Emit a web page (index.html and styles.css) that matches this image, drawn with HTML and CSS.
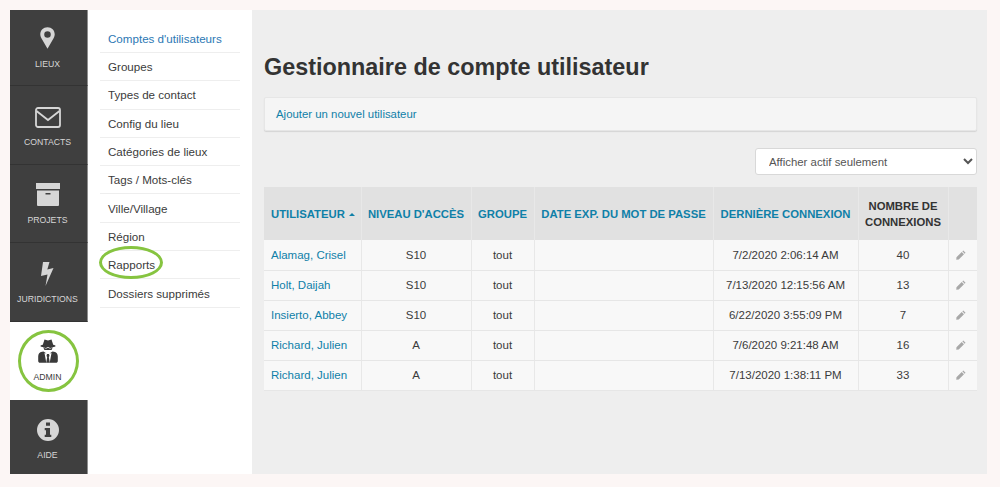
FILE: index.html
```html
<!DOCTYPE html>
<html lang="fr">
<head>
<meta charset="utf-8">
<title>Gestionnaire de compte utilisateur</title>
<link rel="stylesheet" href="styles.css">
</head>
<body>
<div class="app">
  <nav class="rail">
    <a class="rail-item h-lieux">
      <svg class="ico" width="15" height="22" viewBox="0 0 16 23"><path fill-rule="evenodd" d="M8 0C3.500 0 .3 3.300.3 7.600c0 1.600.5 2.800 1.200 4.100L8 23l6.500-11.300c.7-1.300 1.200-2.500 1.200-4.100C15.700 3.300 12.500 0 8 0zm0 4.300a3.500 3.500 0 1 1 0 7 3.500 3.500 0 0 1 0-7z"/></svg>
      <span>LIEUX</span>
    </a>
    <a class="rail-item h-contacts">
      <svg class="ico" width="26" height="21" viewBox="0 0 26 21"><rect x="1" y="1" width="24" height="19" rx="2" fill="none" stroke="currentColor" stroke-width="1.800"/><path d="M1.500 4l11.500 9 11.500-9" fill="none" stroke="currentColor" stroke-width="1.800"/></svg>
      <span>CONTACTS</span>
    </a>
    <a class="rail-item h-projets">
      <svg class="ico" width="24" height="23" viewBox="0 0 24 23"><rect x="0" y="0" width="24" height="6"/><path fill-rule="evenodd" d="M1 7.500h22V22a1 1 0 0 1-1 1H2a1 1 0 0 1-1-1zM9.500 10v1.500h5V10z"/></svg>
      <span>PROJETS</span>
    </a>
    <a class="rail-item h-jur">
      <svg class="ico" width="13" height="24" viewBox="0 0 13 24"><path d="M2 0h6.500L6.300 7.500 12.500 6 4.500 24l2-11.500L0 14z"/></svg>
      <span>JURIDICTIONS</span>
    </a>
    <a class="rail-item h-admin active">
      <svg class="ico" width="20" height="24" viewBox="0 0 20 24"><path fill-rule="evenodd" d="M6.500.5 10 1.500 13.500.5l1.700 5.300c1.300.3 2.300.7 2.300 1.200 0 .6-1.300 1-3 1.300-.1 1-.4 2-1 2.700h-7c-.6-.7-.9-1.700-1-2.700-1.700-.3-3-.7-3-1.300 0-.5 1-.9 2.300-1.200zM6 8.500c1 .6 2.800.6 3.200-.3h1.600c.4.900 2.200.9 3.200.3-.3.800-2 1.300-3 .8-.6-.4-1.400-.4-2 0-1 .5-2.700 0-3-.8z"/><path d="M5.500 12.500 4 12.800C1.500 13.300.2 15 .2 17.500V22c0 1 .8 1.800 1.800 1.800h6.300L6.500 14l2 .5zM14.500 12.500l1.500.3c2.500.5 3.800 2.200 3.800 4.700V22c0 1-.8 1.800-1.800 1.800h-6.300L13.500 14l-2 .5z"/><path d="M9 15h2l.5 2-.7 1 1 5.800H8.200l1-5.800-.7-1z"/></svg>
      <span>ADMIN</span>
    </a>
    <a class="rail-item h-aide">
      <svg class="ico" width="22" height="22" viewBox="0 0 22 22"><path fill-rule="evenodd" d="M11 0a11 11 0 1 1 0 22 11 11 0 0 1 0-22zM9 3.500v3.300h4V3.500zM7.700 9v2.300H9v4.400H7.700V18h6.600v-2.300H13V9z"/></svg>
      <span>AIDE</span>
    </a>
    <div class="ring ring-admin"></div>
  </nav>

  <aside class="subnav">
    <ul class="subnav-list">
      <li class="current">Comptes d'utilisateurs</li>
      <li>Groupes</li>
      <li>Types de contact</li>
      <li>Config du lieu</li>
      <li>Catégories de lieux</li>
      <li>Tags / Mots-clés</li>
      <li>Ville/Village</li>
      <li>Région</li>
      <li>Rapports</li>
      <li>Dossiers supprimés</li>
    </ul>
    <div class="ring ring-rapports"></div>
  </aside>

  <main class="main">
    <h1>Gestionnaire de compte utilisateur</h1>
    <div class="well"><a>Ajouter un nouvel utilisateur</a></div>
    <div class="filter-row">
      <select class="filter"><option>Afficher actif seulement</option></select>
    </div>
    <table class="users">
      <colgroup>
        <col class="c1"><col class="c2"><col class="c3"><col class="c4"><col class="c5"><col class="c6"><col class="c7">
      </colgroup>
      <thead>
        <tr>
          <th class="left">UTILISATEUR <span class="caret"></span></th>
          <th>NIVEAU D'ACCÈS</th>
          <th>GROUPE</th>
          <th>DATE EXP. DU MOT DE PASSE</th>
          <th>DERNIÈRE CONNEXION</th>
          <th class="dark">NOMBRE DE CONNEXIONS</th>
          <th></th>
        </tr>
      </thead>
      <tbody>
        <tr><td class="left"><a>Alamag, Crisel</a></td><td>S10</td><td>tout</td><td></td><td>7/2/2020 2:06:14 AM</td><td>40</td><td><svg class="pen" width="10" height="10" viewBox="0 0 11 11"><path d="M8 .5 10.500 3l-1 1L7 1.500zM6.300 2.200 8.800 4.700 3 10.500.3 10.700.5 8z"/></svg></td></tr>
        <tr><td class="left"><a>Holt, Daijah</a></td><td>S10</td><td>tout</td><td></td><td>7/13/2020 12:15:56 AM</td><td>13</td><td><svg class="pen" width="10" height="10" viewBox="0 0 11 11"><path d="M8 .5 10.500 3l-1 1L7 1.500zM6.300 2.200 8.800 4.700 3 10.500.3 10.700.5 8z"/></svg></td></tr>
        <tr><td class="left"><a>Insierto, Abbey</a></td><td>S10</td><td>tout</td><td></td><td>6/22/2020 3:55:09 PM</td><td>7</td><td><svg class="pen" width="10" height="10" viewBox="0 0 11 11"><path d="M8 .5 10.500 3l-1 1L7 1.500zM6.300 2.200 8.800 4.700 3 10.500.3 10.700.5 8z"/></svg></td></tr>
        <tr><td class="left"><a>Richard, Julien</a></td><td>A</td><td>tout</td><td></td><td>7/6/2020 9:21:48 AM</td><td>16</td><td><svg class="pen" width="10" height="10" viewBox="0 0 11 11"><path d="M8 .5 10.500 3l-1 1L7 1.500zM6.300 2.200 8.800 4.700 3 10.500.3 10.700.5 8z"/></svg></td></tr>
        <tr><td class="left"><a>Richard, Julien</a></td><td>A</td><td>tout</td><td></td><td>7/13/2020 1:38:11 PM</td><td>33</td><td><svg class="pen" width="10" height="10" viewBox="0 0 11 11"><path d="M8 .5 10.500 3l-1 1L7 1.500zM6.300 2.200 8.800 4.700 3 10.500.3 10.700.5 8z"/></svg></td></tr>
      </tbody>
    </table>
  </main>
</div>
</body>
</html>
```
FILE: styles.css
```css
* { box-sizing: border-box; }
html, body { height: 100%; }
body {
  margin: 0;
  padding: 10px 13px 13px 10px;
  background: #fcf6f5;
  font-family: "Liberation Sans", Arial, sans-serif;
  color: #333;
  overflow: hidden;
}
.app { display: flex; height: 464px; background: #fff; }

/* left rail */
.rail { position: relative; width: 78px; flex: none; display: flex; flex-direction: column; }
.rail-item {
  display: flex; flex-direction: column; align-items: center;
  background: #3f3f3f; color: #d6d6d6;
  border-bottom: 1px solid #333;
  border-right: 1px solid #8f8f8f;
  padding-right: 2px;
  font-size: 8.700px; line-height: 10px;
}
.rail-item span { display: block; }
.ico { display: block; fill: currentColor; flex: none; }
.h-lieux { height: 76px; padding-top: 17px; }
.h-lieux span { margin-top: 10px; }
.h-contacts { height: 79px; padding-top: 21px; }
.h-contacts span { margin-top: 9px; }
.h-projets { height: 78px; padding-top: 18px; }
.h-projets span { margin-top: 9px; }
.h-jur { height: 79px; padding-top: 19px; }
.h-jur span { margin-top: 8px; }
.h-admin { height: 78px; padding-top: 17px; }
.h-admin span { margin-top: 9px; }
.h-aide { height: 74px; padding-top: 19px; border-bottom: none; }
.h-aide span { margin-top: 9px; }
.rail-item.active { background: #fff; color: #3a3a3a; border: none; padding-right: 3px; }

.ring { position: absolute; border: 3px solid #86c440; border-radius: 50%; pointer-events: none; }
.ring-admin { left: 8px; top: 320px; width: 61px; height: 62px; }
.ring-rapports { left: 11px; top: 236px; width: 64px; height: 33px; }

/* secondary nav */
.subnav { position: relative; width: 164px; flex: none; padding: 14.700px 12px 0; }
.subnav-list { list-style: none; margin: 0; padding: 0; }
.subnav-list li {
  height: 28.300px; padding: 0 0 0 8px;
  display: flex; align-items: center;
  font-size: 11.600px; color: #3b3b3b;
  border-bottom: 1px solid #eee;
}
.subnav-list li.current { color: #2c78b4; }

/* main */
.main { flex: 1; background: #eee; padding: 0 10px 0 12px; min-width: 0; }
h1 { margin: 43px 0 0; font-size: 23.400px; line-height: 28px; font-weight: 700; color: #333; }
.well {
  margin-top: 16px; height: 34px; padding: 0 11px;
  display: flex; align-items: center;
  background: #f5f5f5; border: 1px solid #e6e6e6; border-radius: 2px;
  box-shadow: 0 1px 1px #d4d4d4;
  font-size: 11.400px;
}
.well a, .users a { color: #0f80a8; }
.filter-row { display: flex; justify-content: flex-end; margin-top: 17px; }
.filter {
  width: 222px; height: 27px; padding: 0 9px;
  background: #fff; border: 1px solid #d8d8d8; border-radius: 3px;
  font: 11.400px "Liberation Sans", Arial, sans-serif; color: #555;
}

/* table */
.users { margin-top: 12px; width: 713px; table-layout: fixed; border-collapse: collapse; font-size: 11.500px; background: #f8f8f8; }
.c1 { width: 97px; } .c2 { width: 110px; } .c3 { width: 63px; } .c4 { width: 179px; }
.c5 { width: 145px; } .c6 { width: 90px; } .c7 { width: 29px; }
.users th {
  height: 53px; padding: 0 3px;
  background: #e1e1e1; color: #0f80a8;
  font-size: 11.300px; line-height: 16px; font-weight: 700; text-align: center;
  border-right: 1px solid #e8e8e8;
}
.users th.dark { color: #333; }
.users th.left, .users td.left { text-align: left; padding-left: 7px; }
.users th:last-child, .users td:last-child { border-right: none; }
.users td {
  height: 30px; padding: 0 4px; text-align: center; color: #3b3b3b;
  border-right: 1px solid #e8e8e8; border-bottom: 1px solid #e6e6e6;
}
.caret {
  display: inline-block; width: 0; height: 0; vertical-align: 2px; margin-left: 1px;
  border-left: 3px solid transparent; border-right: 3px solid transparent; border-bottom: 3px solid #0f80a8;
}
.pen { display: block; margin-left: 3px; fill: #a8a8a8; }
```
